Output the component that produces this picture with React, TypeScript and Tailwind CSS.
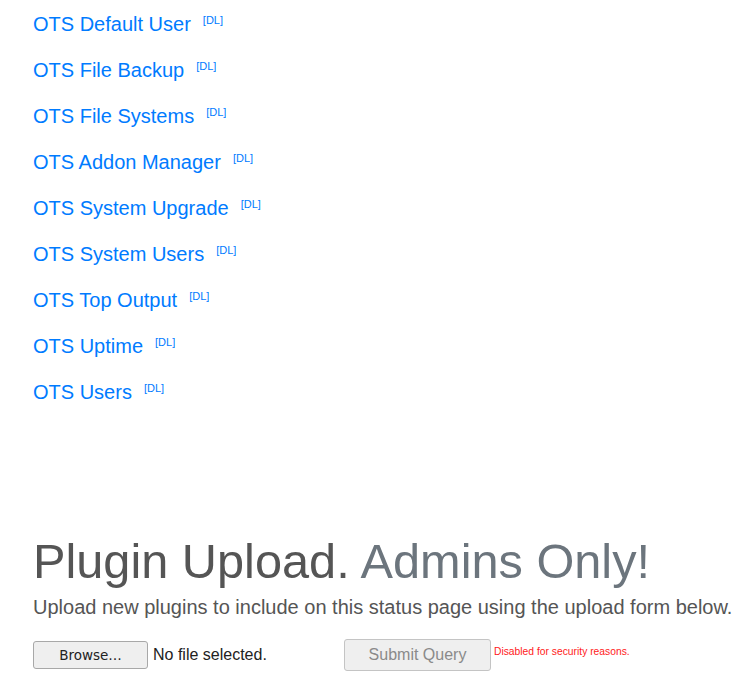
const plugins = [
  "OTS Default User",
  "OTS File Backup",
  "OTS File Systems",
  "OTS Addon Manager",
  "OTS System Upgrade",
  "OTS System Users",
  "OTS Top Output",
  "OTS Uptime",
  "OTS Users",
];

export default function App() {
  return (
    <div className="min-h-[690px] bg-white pl-[33px] pr-[6px] pt-[9px] font-['Liberation_Sans',Arial,sans-serif] text-[#212529]">
      <div className="flex flex-col gap-4">
        {plugins.map((name) => (
          <div key={name} className="text-[20px] leading-[30px]">
            <a href="#" className="text-[#007bff]">
              {name}
            </a>
            <span className="relative -top-[7px] ml-3 text-[11px] leading-none text-[#007bff]">
              [DL]
            </span>
          </div>
        ))}
      </div>

      <h1 className="mt-[125px] text-[48.7px] leading-[1.2] font-normal text-[#555]">
        Plugin Upload. <span className="text-[#6c757d]">Admins Only!</span>
      </h1>
      <p className="mt-[2px] text-[20px] leading-[30px] whitespace-nowrap text-[#555]">
        Upload new plugins to include on this status page using the upload form below.
      </p>

      <div className="mt-[17px] flex items-center">
        <div className="flex w-[307px] items-center">
          <button className="h-[28px] w-[115px] rounded-[3px] border border-[#a8a8a8] bg-[#efefef] font-['DejaVu_Sans',sans-serif] text-[13.5px] text-[#222]">
            Browse…
          </button>
          <span className="ml-[5px] text-[16px] text-[#222]">No file selected.</span>
        </div>
        <button
          disabled
          className="ml-[4px] h-[32px] w-[147px] rounded-[3px] border border-[#c4c4c4] bg-[#efefef] text-[16px] text-[#8a8a8a]"
        >
          Submit Query
        </button>
        <span className="-mt-[8px] ml-[3px] text-[10.3px] text-[#ff1a1a]">
          Disabled for security reasons.
        </span>
      </div>
    </div>
  );
}
